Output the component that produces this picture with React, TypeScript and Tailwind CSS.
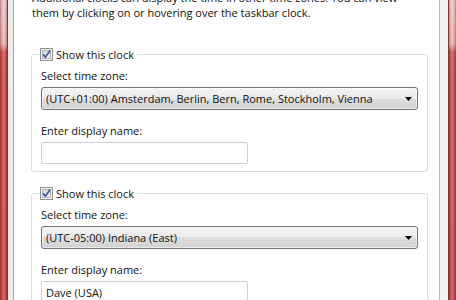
import React from 'react';

const CheckBox: React.FC = () => (
  <svg width="13" height="13" viewBox="0 0 13 13" className="shrink-0" aria-hidden="true">
    <defs>
      <linearGradient id="cb-fill" x1="0" y1="0" x2="1" y2="1">
        <stop offset="0" stopColor="#cdd1d7" />
        <stop offset="1" stopColor="#f7f7f7" />
      </linearGradient>
    </defs>
    <rect x="0.5" y="0.5" width="12" height="12" fill="#f4f4f4" stroke="#8e8f8f" />
    <rect x="2.5" y="2.5" width="8" height="8" fill="url(#cb-fill)" stroke="#b3b7bd" />
    <path d="M3.2 6.4 L5.4 9.2 L10.2 2.6" fill="none" stroke="#3f5a94" strokeWidth="1.7" />
  </svg>
);

const ComboBox: React.FC<{ value: string }> = ({ value }) => (
  <div className="flex h-[23px] w-[377px] items-center justify-between rounded-[3px] border border-[#707070] bg-[linear-gradient(#f3f3f3_0%,#ebebeb_50%,#dedede_50%,#d2d2d2_100%)] pl-[4px] pr-[4px] shadow-[inset_0_0_0_1px_rgba(255,255,255,0.55)]">
    <span className="truncate">{value}</span>
    <svg width="7" height="4" viewBox="0 0 7 4" className="mr-[1px] shrink-0" aria-hidden="true">
      <path d="M0 0 H7 L3.5 4 Z" fill="#000" />
    </svg>
  </div>
);

const ClockGroup: React.FC<{ zone: string; name?: string; className?: string }> = ({ zone, name, className }) => (
  <fieldset className={`w-[396px] rounded-[3px] border border-[#d5dfe5] px-[9px] pb-[7px] ${className ?? ''}`}>
    <legend className="-ml-[1px] flex h-[16px] items-center gap-[3px] pr-[4px]">
      <CheckBox />
      <span>Show this clock</span>
    </legend>
    <div className="mt-[6px] h-[16px] leading-[16px]">Select time zone:</div>
    <div className="mt-[3px]">
      <ComboBox value={zone} />
    </div>
    <div className="mt-[13px] h-[16px] leading-[16px]">Enter display name:</div>
    <div className="mt-[3px] flex h-[22px] w-[207px] items-center rounded-[2px] border border-[#c9ced4] bg-white pl-[4px]">
      {name}
    </div>
  </fieldset>
);

export default function App() {
  return (
    <div className="flex h-[300px] w-[456px] overflow-hidden bg-white font-['Open_Sans','Noto_Sans',sans-serif] text-[11px] leading-[15px] text-[#111]">
      {/* left window frame */}
      <div className="w-[7px] shrink-0 bg-[linear-gradient(to_right,rgba(110,10,10,0.35),rgba(255,255,255,0.25)_55%,rgba(110,10,10,0.3)),linear-gradient(to_bottom,#f1cfcf_0px,#e8b6b6_44px,#c84646_52px,#c53e3e_100%)]" />
      <div className="w-px shrink-0 bg-[#7a3434]" />
      <div className="w-[5px] shrink-0 bg-[#ececec]" />
      <div className="w-px shrink-0 bg-[#a9a9a9]" />

      {/* dialog content */}
      <div className="flex-1 overflow-hidden">
        <p className="-mt-[10px] pl-[18px]">
          Additional clocks can display the time in other time zones. You can view
          <br />
          them by clicking on or hovering over the taskbar clock.
        </p>
        <div className="pl-[17px]">
          <ClockGroup className="mt-[26px]" zone="(UTC+01:00) Amsterdam, Berlin, Bern, Rome, Stockholm, Vienna" />
          <ClockGroup className="mt-[13px]" zone="(UTC-05:00) Indiana (East)" name="Dave (USA)" />
        </div>
      </div>

      {/* right window frame */}
      <div className="w-px shrink-0 bg-[#b8b8b8]" />
      <div className="w-[8px] shrink-0 bg-[#f1f1f1]" />
      <div className="w-px shrink-0 bg-[#7a3434]" />
      <div className="w-[7px] shrink-0 bg-[linear-gradient(to_right,rgba(110,10,10,0.3),rgba(255,255,255,0.25)_45%,rgba(110,10,10,0.35)),linear-gradient(to_bottom,#f1cfcf_0px,#e8b6b6_44px,#c84646_52px,#c53e3e_100%)]" />
    </div>
  );
}
